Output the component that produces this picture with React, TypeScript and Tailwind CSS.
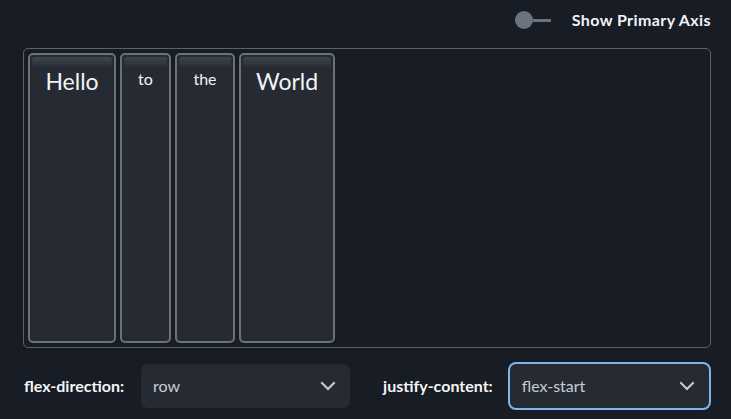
import React from "react";

const Chevron = () => (
  <svg width="16" height="10" viewBox="0 0 16 10" fill="none" stroke="#c9cdd3" strokeWidth="2" strokeLinecap="square">
    <polyline points="2,2 8,8 14,2" />
  </svg>
);

const Item = ({ label, w, big }: { label: string; w: string; big?: boolean }) => (
  <div className={`${w} h-full shrink-0 rounded-[5px] border-2 border-[#6b717b] bg-[#262b33] p-[2px] flex flex-col items-center`}>
    <div className="h-[10px] w-full rounded-t-[3px] bg-gradient-to-b from-[#3e434c] to-[#2b3038]" />
    <span
      className={big ? "mt-[0px] text-[23px] leading-[28px] text-[#f1f3f5]" : "mt-[2px] text-[16px] leading-[20px] text-[#f1f3f5]"}
      style={{ fontFamily: "Lato, 'Noto Sans', sans-serif" }}
    >
      {label}
    </span>
  </div>
);

export default function App() {
  return (
    <div
      className="w-[731px] h-[419px] bg-[#171c25] pl-[23px] pr-[20px] flex flex-col"
      style={{ fontFamily: "Lato, 'Noto Sans', sans-serif" }}
    >
      <div className="h-[48px] flex items-start justify-end pt-[10px]">
        <div className="flex items-center h-[20px]">
          <div className="w-[18px] h-[18px] rounded-full bg-[#6b7280]" />
          <div className="w-[18px] h-[3px] bg-[#6b7280]" />
          <span className="ml-[21px] text-[16px] font-bold text-[#f3f4f6] tracking-[0.4px] whitespace-nowrap">Show Primary Axis</span>
        </div>
      </div>
      <div className="h-[302px] rounded-[5px] border border-[#5b616b] p-[4px] flex gap-[4px]">
        <Item label="Hello" w="w-[88px]" big />
        <Item label="to" w="w-[51px]" />
        <Item label="the" w="w-[60px]" />
        <Item label="World" w="w-[96px]" big />
      </div>
      <div className="flex items-center h-[72px] pt-[6px]">
        <span className="shrink-0 whitespace-nowrap text-[16px] font-bold text-[#f3f4f6] pl-[1px]">flex-direction:</span>
        <div className="shrink-0 ml-[17px] w-[209px] h-[44px] rounded-[7px] bg-[#262b33] flex items-center justify-between pl-[12px] pr-[14px]">
          <span className="text-[16px] text-[#c9cdd3]">row</span>
          <Chevron />
        </div>
        <span className="shrink-0 whitespace-nowrap ml-[33px] text-[16px] font-bold text-[#f3f4f6]">justify-content:</span>
        <div className="shrink-0 ml-[15px] w-[203px] h-[48px] rounded-[8px] border-2 border-[#7fb4ee] bg-[#262b33] flex items-center justify-between pl-[12px] pr-[14px]">
          <span className="text-[16px] text-[#c9cdd3]">flex-start</span>
          <Chevron />
        </div>
      </div>
    </div>
  );
}
